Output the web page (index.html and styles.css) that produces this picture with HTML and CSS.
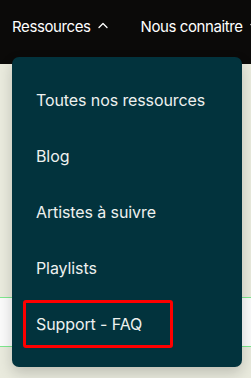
FILE: index.html
```html
<!DOCTYPE html>
<html lang="fr">
<head>
    <meta charset="UTF-8">
    <meta name="viewport" content="width=device-width, initial-scale=1.0">
    <title>Ressources</title>
    <link rel="stylesheet" href="styles.css">
</head>
<body>
    <header class="topbar">
        <nav class="nav">
            <div class="nav-item open">
                <span>Ressources</span>
                <svg class="chevron" viewBox="0 0 12 12" fill="none" stroke="currentColor" stroke-width="1.3" stroke-linecap="round" stroke-linejoin="round"><path d="M2 7.5L6 3.5l4 4"/></svg>
                <ul class="dropdown">
                    <li><a href="#">Toutes nos ressources</a></li>
                    <li><a href="#">Blog</a></li>
                    <li><a href="#">Artistes à suivre</a></li>
                    <li><a href="#">Playlists</a></li>
                    <li><a href="#" class="highlight">Support - FAQ</a></li>
                </ul>
            </div>
            <div class="nav-item">
                <span>Nous connaitre</span>
                <svg class="chevron" viewBox="0 0 12 12" fill="none" stroke="currentColor" stroke-width="1.3" stroke-linecap="round" stroke-linejoin="round"><path d="M2 4.5L6 8.5l4-4"/></svg>
            </div>
        </nav>
    </header>

    <main class="page">
        <div class="strip"></div>
    </main>
</body>
</html>
```

FILE: styles.css
```css
* {
    margin: 0;
    padding: 0;
    box-sizing: border-box;
}

body {
    font-family: 'Inter', 'Liberation Sans', sans-serif;
    background: #e9eadd;
    height: 100vh;
    overflow: hidden;
}

.topbar {
    background: #0b0a09;
    height: 64px;
}

.nav {
    display: flex;
    gap: 32px;
    padding: 17px 0 0 12px;
    white-space: nowrap;
}

.nav-item {
    position: relative;
    display: flex;
    align-items: center;
    gap: 6px;
    color: #fff;
    font-size: 15px;
    letter-spacing: -0.4px;
    height: 18px;
}

.chevron {
    width: 12px;
    height: 12px;
}

.dropdown {
    position: absolute;
    top: 40px;
    left: 0;
    width: 230px;
    list-style: none;
    background: #02333d;
    border-radius: 7px;
    padding: 19px 11px;
    display: flex;
    flex-direction: column;
    gap: 8px;
    box-shadow: 0 6px 14px rgba(0, 0, 0, 0.18);
    letter-spacing: 0;
    z-index: 10;
}

.dropdown a {
    display: flex;
    align-items: center;
    height: 48px;
    padding: 0 10px;
    border: 3px solid transparent;
    border-radius: 3px;
    color: #eef1ef;
    font-size: 16px;
    letter-spacing: -0.1px;
    text-decoration: none;
}

.dropdown a.highlight {
    width: 150px;
    border-color: #ff0000;
}

.page {
    padding-top: 233px;
}

.strip {
    height: 50px;
    background: #fafafa;
    border-top: 1px solid #7ee88e;
    border-bottom: 1px solid #7ee88e;
}
```
